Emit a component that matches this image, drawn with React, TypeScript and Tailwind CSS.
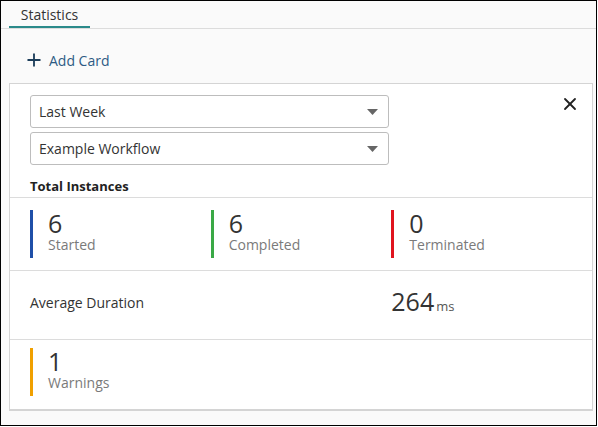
import { X, Plus } from 'lucide-react'

type Stat = {
  value: number
  label: string
  color: string
}

const stats: Stat[] = [
  { value: 6, label: 'Started', color: 'bg-[#1f4fa8]' },
  { value: 6, label: 'Completed', color: 'bg-[#3aa946]' },
  { value: 0, label: 'Terminated', color: 'bg-[#e0141e]' },
]

function StatItem({ stat }: { stat: Stat }) {
  return (
    <div className="flex h-[48px] items-stretch">
      <div className={`w-[3px] ${stat.color}`} />
      <div className="ml-[15px] flex flex-col">
        <span className="mt-[1px] text-[25px] leading-[25px] text-[#333]">{stat.value}</span>
        <span className="text-[14px] leading-[18px] text-[#7a7a7a]">{stat.label}</span>
      </div>
    </div>
  )
}

function Select({ value }: { value: string }) {
  return (
    <div className="flex h-[33px] w-[359px] items-center justify-between rounded-[3px] border border-[#bdbdbd] bg-white pl-[8px] pr-[10px]">
      <span className="text-[14px] text-[#333]">{value}</span>
      <svg width="11" height="6" viewBox="0 0 11 6">
        <path d="M0 0 L11 0 L5.5 6 Z" fill="#666" />
      </svg>
    </div>
  )
}

export default function App() {
  return (
    <div
      className="h-[426px] w-[597px] border border-black bg-[#fafafa]"
      style={{ fontFamily: '"Open Sans", sans-serif' }}
    >
      <div className="flex h-[28px] border-b border-[#dcdcdc] pl-[8px]">
        <div className="flex w-[81px] flex-col items-center border-b-2 border-[#2b8a8a]">
          <span className="mt-[5px] text-[14px] leading-[18px] text-[#333]">Statistics</span>
        </div>
      </div>

      <div className="flex h-[54px] items-center pl-[23px] pt-[8px]">
        <Plus size={20} strokeWidth={2.2} className="text-[#1c3d5a]" />
        <span className="ml-[5px] text-[14px] text-[#2d5a84]">Add Card</span>
      </div>

      <div className="ml-[8px] w-[584px] border border-b-2 border-[#d4d4d4] bg-white">
        <div className="relative px-[20px] pt-[11px]">
          <div className="flex flex-col gap-[4px]">
            <Select value="Last Week" />
            <Select value="Example Workflow" />
          </div>
          <button className="absolute right-[12px] top-[10px] text-[#222]">
            <X size={20} strokeWidth={2.2} />
          </button>
          <div className="pb-[2px] pt-[13px] text-[13px] font-bold leading-[17px] text-[#222]">
            Total Instances
          </div>
        </div>

        <div className="grid h-[73px] grid-cols-3 items-center border-t border-[#dcdcdc] px-[20px]">
          {stats.map((s) => (
            <StatItem key={s.label} stat={s} />
          ))}
        </div>

        <div className="grid h-[69px] grid-cols-3 items-center border-t border-[#dcdcdc] px-[20px] pb-[6px]">
          <span className="col-span-2 text-[14px] text-[#333]">Average Duration</span>
          <div className="flex items-baseline">
            <span className="text-[25px] text-[#333]">264</span>
            <span className="ml-[2px] text-[13px] text-[#555]">ms</span>
          </div>
        </div>

        <div className="flex h-[70px] items-start border-t border-[#dcdcdc] px-[20px] pt-[8px]">
          <StatItem stat={{ value: 1, label: 'Warnings', color: 'bg-[#f0a000]' }} />
        </div>
      </div>
    </div>
  )
}
